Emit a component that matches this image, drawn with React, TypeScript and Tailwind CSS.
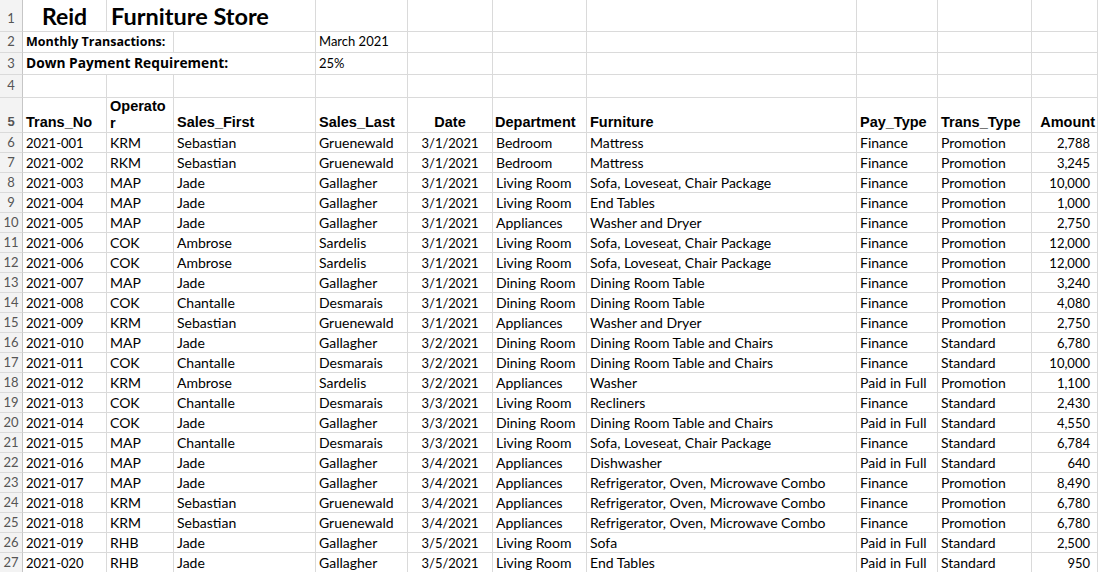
import React from 'react';

const data: string[][] = [
  ['2021-001', 'KRM', 'Sebastian', 'Gruenewald', '3/1/2021', 'Bedroom', 'Mattress', 'Finance', 'Promotion', '2,788'],
  ['2021-002', 'RKM', 'Sebastian', 'Gruenewald', '3/1/2021', 'Bedroom', 'Mattress', 'Finance', 'Promotion', '3,245'],
  ['2021-003', 'MAP', 'Jade', 'Gallagher', '3/1/2021', 'Living Room', 'Sofa, Loveseat, Chair Package', 'Finance', 'Promotion', '10,000'],
  ['2021-004', 'MAP', 'Jade', 'Gallagher', '3/1/2021', 'Living Room', 'End Tables', 'Finance', 'Promotion', '1,000'],
  ['2021-005', 'MAP', 'Jade', 'Gallagher', '3/1/2021', 'Appliances', 'Washer and Dryer', 'Finance', 'Promotion', '2,750'],
  ['2021-006', 'COK', 'Ambrose', 'Sardelis', '3/1/2021', 'Living Room', 'Sofa, Loveseat, Chair Package', 'Finance', 'Promotion', '12,000'],
  ['2021-006', 'COK', 'Ambrose', 'Sardelis', '3/1/2021', 'Living Room', 'Sofa, Loveseat, Chair Package', 'Finance', 'Promotion', '12,000'],
  ['2021-007', 'MAP', 'Jade', 'Gallagher', '3/1/2021', 'Dining Room', 'Dining Room Table', 'Finance', 'Promotion', '3,240'],
  ['2021-008', 'COK', 'Chantalle', 'Desmarais', '3/1/2021', 'Dining Room', 'Dining Room Table', 'Finance', 'Promotion', '4,080'],
  ['2021-009', 'KRM', 'Sebastian', 'Gruenewald', '3/1/2021', 'Appliances', 'Washer and Dryer', 'Finance', 'Promotion', '2,750'],
  ['2021-010', 'MAP', 'Jade', 'Gallagher', '3/2/2021', 'Dining Room', 'Dining Room Table and Chairs', 'Finance', 'Standard', '6,780'],
  ['2021-011', 'COK', 'Chantalle', 'Desmarais', '3/2/2021', 'Dining Room', 'Dining Room Table and Chairs', 'Finance', 'Standard', '10,000'],
  ['2021-012', 'KRM', 'Ambrose', 'Sardelis', '3/2/2021', 'Appliances', 'Washer', 'Paid in Full', 'Promotion', '1,100'],
  ['2021-013', 'COK', 'Chantalle', 'Desmarais', '3/3/2021', 'Living Room', 'Recliners', 'Finance', 'Standard', '2,430'],
  ['2021-014', 'COK', 'Jade', 'Gallagher', '3/3/2021', 'Dining Room', 'Dining Room Table and Chairs', 'Paid in Full', 'Standard', '4,550'],
  ['2021-015', 'MAP', 'Chantalle', 'Desmarais', '3/3/2021', 'Living Room', 'Sofa, Loveseat, Chair Package', 'Finance', 'Standard', '6,784'],
  ['2021-016', 'MAP', 'Jade', 'Gallagher', '3/4/2021', 'Appliances', 'Dishwasher', 'Paid in Full', 'Standard', '640'],
  ['2021-017', 'MAP', 'Jade', 'Gallagher', '3/4/2021', 'Appliances', 'Refrigerator, Oven, Microwave Combo', 'Finance', 'Promotion', '8,490'],
  ['2021-018', 'KRM', 'Sebastian', 'Gruenewald', '3/4/2021', 'Appliances', 'Refrigerator, Oven, Microwave Combo', 'Finance', 'Promotion', '6,780'],
  ['2021-018', 'KRM', 'Sebastian', 'Gruenewald', '3/4/2021', 'Appliances', 'Refrigerator, Oven, Microwave Combo', 'Finance', 'Promotion', '6,780'],
  ['2021-019', 'RHB', 'Jade', 'Gallagher', '3/5/2021', 'Living Room', 'Sofa', 'Paid in Full', 'Standard', '2,500'],
  ['2021-020', 'RHB', 'Jade', 'Gallagher', '3/5/2021', 'Living Room', 'End Tables', 'Paid in Full', 'Standard', '950'],
];

const widths = [
  'w-[84px]', 'w-[67px]', 'w-[142px]', 'w-[92px]', 'w-[85px]',
  'w-[94px]', 'w-[270px]', 'w-[81px]', 'w-[94px]', 'w-[66px]',
];

// numeric columns read narrower, like Calibri digits
const colText = [
  'pl-[3px] text-[13px]', 'pl-[3px] text-[14px]', 'pl-[3px] text-[14px]', 'pl-[3px] text-[14px]',
  'justify-center text-[13px]', 'pl-[3px] text-[14px]', 'pl-[3px] text-[14px]', 'pl-[3px] text-[14px]',
  'pl-[3px] text-[14px]', 'justify-end pr-[7px] text-[13px]',
];

const cellBase = 'shrink-0 flex border-r border-b border-[#dadada] whitespace-nowrap overflow-hidden';

const RowNum: React.FC<{ n: number; h: string; align?: string }> = ({ n, h, align = 'items-center' }) => (
  <div className={`w-[23px] shrink-0 ${h} flex ${align} justify-center bg-[#f3f3f3] border-r border-b border-r-[#c6c6c6] border-b-[#dadada] text-[13px] text-[#555]`}>
    {n}
  </div>
);

const Blank: React.FC<{ w: string; h: string }> = ({ w, h }) => <div className={`${cellBase} ${w} ${h}`} />;

export default function App() {
  return (
    <div className="w-[1098px] h-[572px] overflow-hidden bg-white text-black font-['Lato',sans-serif]">
      {/* row 1 */}
      <div className="flex h-[32px]">
        <RowNum n={1} h="h-[32px]" align="items-end pb-[3px]" />
        <div className={`${cellBase} w-[84px] h-[32px] items-end justify-center pb-[1px] text-[23px] leading-[28px] font-bold`}>Reid</div>
        <div className={`${cellBase} w-[209px] h-[32px] items-end pl-[4px] pb-[1px] text-[23.5px] leading-[28px] font-bold`}>Furniture Store</div>
        {widths.slice(3).map((w, i) => <Blank key={i} w={w} h="h-[32px]" />)}
      </div>
      {/* row 2 */}
      <div className="flex h-[21px]">
        <RowNum n={2} h="h-[21px]" />
        <div className={`${cellBase} w-[151px] h-[21px] items-center pl-[3px] text-[12.5px] font-bold font-['Open_Sans',sans-serif]`}>Monthly Transactions:</div>
        <Blank w="w-[142px]" h="h-[21px]" />
        <div className={`${cellBase} w-[92px] h-[21px] items-center pl-[3px] text-[13px]`}>March 2021</div>
        {widths.slice(4).map((w, i) => <Blank key={i} w={w} h="h-[21px]" />)}
      </div>
      {/* row 3 */}
      <div className="flex h-[22px]">
        <RowNum n={3} h="h-[22px]" />
        <div className={`${cellBase} w-[293px] h-[22px] items-center pl-[3px] text-[13.75px] font-bold font-['Open_Sans',sans-serif]`}>Down Payment Requirement:</div>
        <div className={`${cellBase} w-[92px] h-[22px] items-center pl-[3px] text-[13px]`}>25%</div>
        {widths.slice(4).map((w, i) => <Blank key={i} w={w} h="h-[22px]" />)}
      </div>
      {/* row 4 */}
      <div className="flex h-[23px]">
        <RowNum n={4} h="h-[23px]" />
        {widths.map((w, i) => <Blank key={i} w={w} h="h-[23px]" />)}
      </div>
      {/* row 5 headers */}
      <div className="flex h-[35px] font-['Liberation_Sans',sans-serif] font-bold text-[14.5px] leading-[17px]">
        <RowNum n={5} h="h-[35px]" align="items-end pb-[2px]" />
        <div className={`${cellBase} w-[84px] h-[35px] items-end pl-[3px] pb-[1px]`}>Trans_No</div>
        <div className={`${cellBase} w-[67px] h-[35px] items-end pl-[3px] whitespace-normal`}>Operato<br />r</div>
        <div className={`${cellBase} w-[142px] h-[35px] items-end pl-[3px] pb-[1px]`}>Sales_First</div>
        <div className={`${cellBase} w-[92px] h-[35px] items-end pl-[3px] pb-[1px]`}>Sales_Last</div>
        <div className={`${cellBase} w-[85px] h-[35px] items-end justify-center pb-[1px]`}>Date</div>
        <div className={`${cellBase} w-[94px] h-[35px] items-end pl-[2px] pb-[1px]`}>Department</div>
        <div className={`${cellBase} w-[270px] h-[35px] items-end pl-[3px] pb-[1px]`}>Furniture</div>
        <div className={`${cellBase} w-[81px] h-[35px] items-end pl-[3px] pb-[1px]`}>Pay_Type</div>
        <div className={`${cellBase} w-[94px] h-[35px] items-end pl-[3px] pb-[1px]`}>Trans_Type</div>
        <div className={`${cellBase} w-[66px] h-[35px] items-end justify-end pr-[2px] pb-[1px]`}>Amount</div>
      </div>
      {/* data rows */}
      {data.map((row, r) => (
        <div key={r} className="flex h-[20px]">
          <RowNum n={r + 6} h="h-[20px]" />
          {row.map((v, c) => (
            <div key={c} className={`${cellBase} ${widths[c]} h-[20px] items-center pt-[1px] leading-[16px] ${colText[c]}`}>
              {v}
            </div>
          ))}
        </div>
      ))}
    </div>
  );
}
